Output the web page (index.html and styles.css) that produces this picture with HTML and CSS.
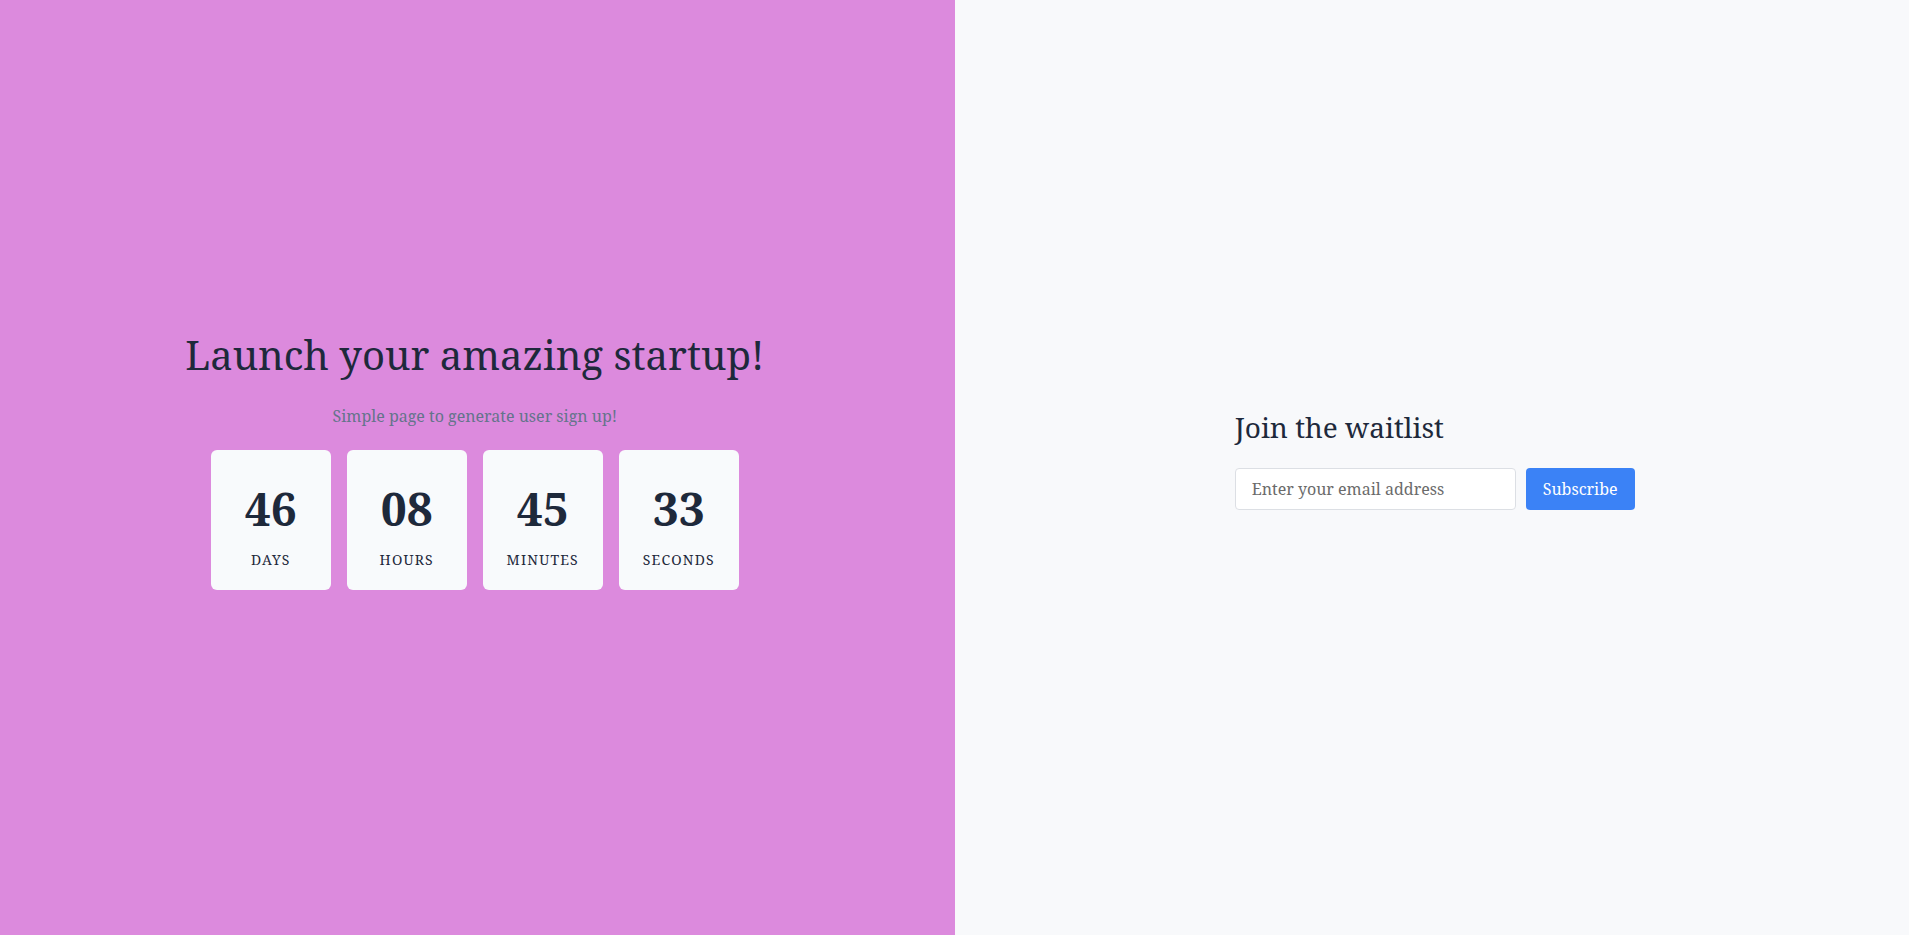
FILE: index.html
```html
<!DOCTYPE html>
<html lang="en">
<head>
<meta charset="utf-8">
<title>Launch your amazing startup!</title>
<link rel="stylesheet" href="styles.css">
</head>
<body>
<main class="page">
  <section class="hero">
    <div class="intro">
      <h1 class="title">Launch your amazing startup!</h1>
      <p class="subtitle">Simple page to generate user sign up!</p>
    </div>
    <div class="countdown">
      <div class="unit"><div class="num">46</div><div class="label">Days</div></div>
      <div class="unit"><div class="num">08</div><div class="label">Hours</div></div>
      <div class="unit"><div class="num">45</div><div class="label">Minutes</div></div>
      <div class="unit"><div class="num">33</div><div class="label">Seconds</div></div>
    </div>
  </section>
  <section class="signup">
    <div class="signup-box">
      <h2 class="signup-title">Join the waitlist</h2>
      <form class="signup-form">
        <input class="email" type="email" placeholder="Enter your email address">
        <button class="btn" type="button">Subscribe</button>
      </form>
    </div>
  </section>
</main>
</body>
</html>
```

FILE: styles.css
```css
* { box-sizing: border-box; }
html, body { margin: 0; padding: 0; }
body {
  font-family: "Noto Serif", "DejaVu Serif", serif;
  color: #1e293b;
  background: #f8f9fb;
}
.page {
  display: flex;
  height: 100vh;
}
.hero {
  width: 50%;
  background: #dc8add;
  display: flex;
  flex-direction: column;
  align-items: center;
  padding-top: 331px;
  padding-right: 5px;
}
.intro {
  text-align: center;
}
.title {
  margin: 0;
  font-size: 40px;
  line-height: 48px;
  font-weight: 400;
}
.subtitle {
  margin: 25px 0 0;
  font-size: 16px;
  line-height: 24px;
  color: #64748b;
}
.countdown {
  display: flex;
  gap: 16px;
  margin-top: 22px;
}
.unit {
  width: 120px;
  height: 140px;
  background: #f8fafc;
  border-radius: 6px;
  padding-top: 35px;
  text-align: center;
}
.num {
  font-size: 46px;
  line-height: 46px;
  font-weight: 700;
}
.label {
  margin-top: 21px;
  font-size: 14px;
  line-height: 16px;
  text-transform: uppercase;
  letter-spacing: 1.2px;
}
.signup {
  width: 50%;
  display: flex;
  justify-content: center;
  padding-left: 6px;
  padding-top: 409px;
}
.signup-box { width: 400px; }
.signup-title {
  margin: 0;
  font-size: 28px;
  line-height: 36px;
  font-weight: 400;
}
.signup-form {
  display: flex;
  gap: 10px;
  margin-top: 23px;
}
.email {
  width: 281px;
  height: 42px;
  border: 1px solid #dcdfe4;
  border-radius: 4px;
  background: #fff;
  padding: 0 16px;
  font-family: inherit;
  font-size: 16px;
  color: #1e293b;
}
.email::placeholder { color: #6b6b6b; }
.btn {
  height: 42px;
  border: none;
  border-radius: 4px;
  background: #3b82f6;
  color: #fff;
  font-family: inherit;
  font-size: 16px;
  padding: 0 17px;
}
```
